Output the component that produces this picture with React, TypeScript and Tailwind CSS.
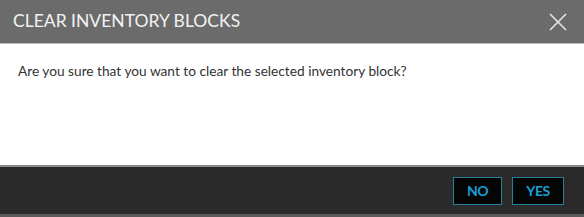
export default function App() {
  return (
    <div className="w-[584px] h-[217px] flex flex-col bg-white" style={{ fontFamily: "Lato, 'Open Sans', sans-serif" }}>
      <div className="h-[43px] bg-[#6b6b6b] border-b border-[#bdbdbd] flex items-center justify-between pl-[13px] pr-[16px] box-content">
        <span className="text-[17.5px] text-[#f2f2f2]">CLEAR INVENTORY BLOCKS</span>
        <svg width="20" height="20" viewBox="0 0 20 20" className="mt-[1px]">
          <path d="M2 2 L18 18 M18 2 L2 18" stroke="#e6e6e6" strokeWidth="1.6" />
        </svg>
      </div>
      <div className="h-[121px] px-[18px] pt-[17px]">
        <p className="text-[13.7px] text-[#333333]">Are you sure that you want to clear the selected inventory block?</p>
      </div>
      <div className="flex-1 bg-[#2a2a2a] border-t-[2px] border-[#8a8a8a] border-b-[3px] border-b-[#5a5a5a] flex items-center justify-end gap-[10px] pr-[20px]">
        <button className="w-[49px] h-[28px] bg-[#050505] border border-[#2a7f9c] text-[#1b9fd3] text-[14px] font-bold tracking-[-0.5px]">NO</button>
        <button className="w-[52px] h-[28px] bg-[#050505] border border-[#2a7f9c] text-[#1b9fd3] text-[14px] font-bold tracking-[-0.5px]">YES</button>
      </div>
    </div>
  );
}
